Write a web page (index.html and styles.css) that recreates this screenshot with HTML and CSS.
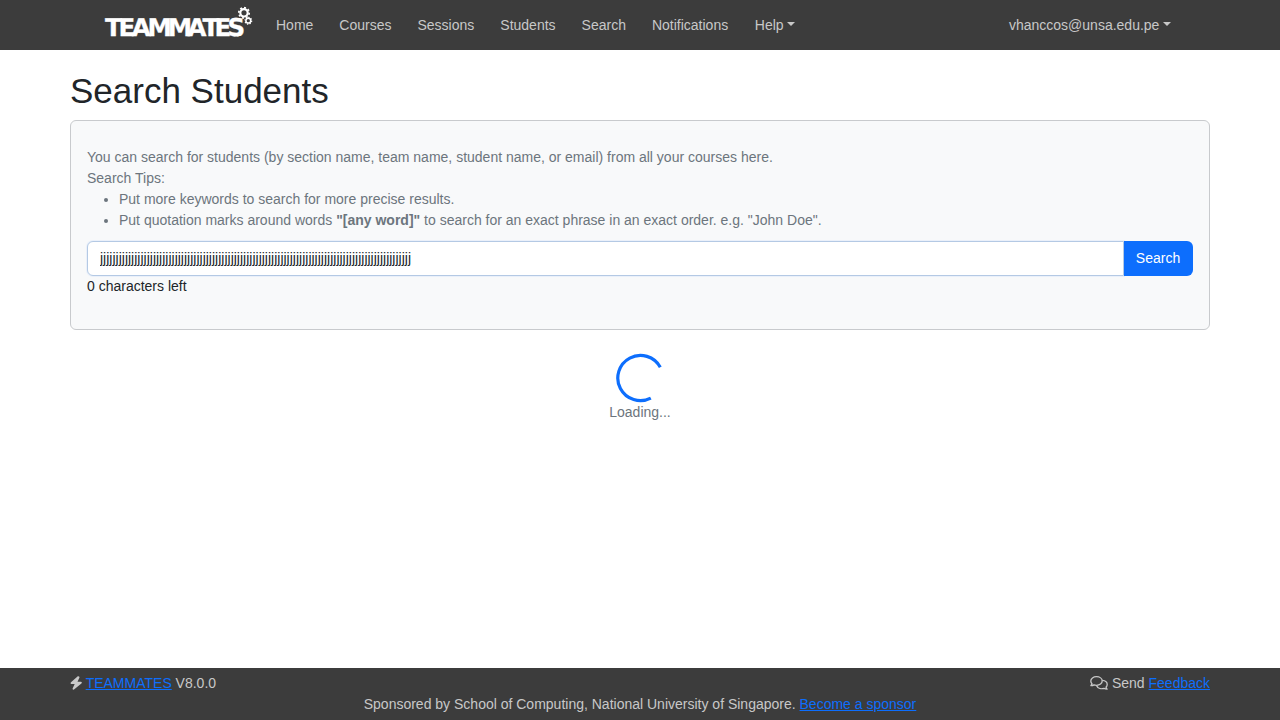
FILE: index.html
```html
<!DOCTYPE html>
<html lang="en">
<head>
<meta charset="utf-8">
<title>TEAMMATES</title>
<link rel="stylesheet" href="styles.css">
</head>
<body>
<nav class="navbar">
  <a class="brand" aria-label="TEAMMATES home">
    <svg width="148" height="32" viewBox="105 6 148 32">
      <text class="logo-text" y="35.5" x="105 118.4 131.8 147.4 167.8 187.4 202.6 214.4 227.6">TEAMMATES</text>
      <circle class="gear" cx="244" cy="12.8" r="3.7" stroke-width="2.2"/>
      <circle class="gear" cx="244" cy="12.8" r="5.2" stroke-width="1.7" pathLength="80" stroke-dasharray="5 5"/>
      <circle class="gear" cx="248.3" cy="20.7" r="2.4" stroke-width="1.5"/>
      <circle class="gear" cx="248.3" cy="20.7" r="3.4" stroke-width="1.2" pathLength="80" stroke-dasharray="5 5"/>
    </svg>
  </a>
  <div class="nav-links">
    <a>Home</a><a>Courses</a><a>Sessions</a><a>Students</a><a>Search</a><a>Notifications</a><a class="dropdown help-menu">Help</a>
  </div>
  <a class="dropdown account">vhanccos@unsa.edu.pe</a>
</nav>
<main class="container">
  <h1>Search Students</h1>
  <section class="card">
    <div class="help">
      <p>You can search for students (by section name, team name, student name, or email) from all your courses here.</p>
      <p>Search Tips:</p>
      <ul>
        <li>Put more keywords to search for more precise results.</li>
        <li>Put quotation marks around words <b>"[any word]"</b> to search for an exact phrase in an exact order. e.g. "John Doe".</li>
      </ul>
    </div>
    <div class="input-group">
      <input type="text" value="jjjjjjjjjjjjjjjjjjjjjjjjjjjjjjjjjjjjjjjjjjjjjjjjjjjjjjjjjjjjjjjjjjjjjjjjjjjjjjjjjjjjjjjjjjjjjjjjjjjj">
      <button>Search</button>
    </div>
    <div>0 characters left</div>
  </section>
  <div class="loading">
    <svg width="50" height="50" viewBox="-24.5 -25.5 50 50">
      <path class="spinner" d="M20.8-11.2A22.6 22.6 0 1 0 11.3 19.6"/>
    </svg>
    <div>Loading...</div>
  </div>
</main>
<footer class="footer">
  <div class="footer-row">
    <div>
      <svg class="bolt" width="12" height="14" viewBox="0 0 12 14"><path d="M7.8.2 1 6.3Q-.1 7.8 1.5 8H4.7L2.6 12.4Q2.4 14 4 13.6L11.4 7.4Q12.5 6.1 10.8 5.8H7.5L9.5 1.6Q9.5 0 7.8.2Z"/></svg>
      <a class="link">TEAMMATES</a> V8.0.0
    </div>
    <div>
      <svg class="comments" width="18" height="14" viewBox="0 0 18 14"><path d="M6.5.7C3.3.7.8 2.6.8 5c0 1.2.5 2 1.2 2.8L.9 9.7c1.4 0 2.4-.3 3.1-.8.8.3 1.6.4 2.5.4 3.2 0 5.7-1.9 5.7-4.3S9.7.7 6.5.7Z"/><path d="M12.3 4.3c2.8.2 4.9 1.9 4.9 4.1 0 1.1-.5 2-1.2 2.8l1.1 2c-1.4 0-2.4-.4-3.1-.9-2.7.9-6.1.3-7.4-2.5"/></svg>
      Send <a class="link">Feedback</a>
    </div>
  </div>
  <div class="sponsor">Sponsored by School of Computing, National University of Singapore. <a class="link">Become a sponsor</a></div>
</footer>
</body>
</html>
```

FILE: styles.css
```css
* { box-sizing: border-box; }
body {
  margin: 0;
  height: 720px;
  display: flex;
  flex-direction: column;
  overflow: hidden;
  background: #fff;
  color: #212529;
  font: 14px/21px "Liberation Sans", Arial, sans-serif;
}
.navbar {
  height: 50px;
  flex: none;
  padding: 0 109px 0 105px;
  display: flex;
  align-items: center;
  background: #3c3c3c;
  color: #c8c8c8;
}
.brand { height: 32px; margin: -6px 23px 0 0; }
.brand svg { display: block; overflow: visible; }
.logo-text {
  font: bold 24.5px "DejaVu Sans", sans-serif;
  fill: #fff;
  stroke: #fff;
  stroke-width: 0.3;
  text-rendering: geometricPrecision;
}
.gear { fill: none; stroke: #fff; }
.nav-links { display: flex; gap: 26px; }
.help-menu { margin-left: 0.6px; }
.dropdown::after {
  content: "";
  display: inline-block;
  margin-left: 3.6px;
  vertical-align: 3.6px;
  border: 4.2px solid transparent;
  border-top-color: currentColor;
  border-bottom: 0;
}
.account { margin-left: auto; }
.container { width: 1140px; margin: 20px auto 0; flex: 1; }
h1 { margin: 0 0 8px; font-size: 35px; line-height: 42px; font-weight: 400; }
.card {
  height: 210px;
  padding: 26px 16px 0;
  border: 1px solid #c8cacd;
  border-radius: 6px;
  background: #f8f9fa;
}
.help { color: #6c757d; }
.help p { margin: 0; }
.help ul { margin: 0 0 10px; padding-left: 32px; }
.input-group { display: flex; height: 35px; }
.input-group input {
  flex: 1;
  padding: 0 12px;
  border: 1px solid #b4c9e4;
  border-radius: 6px 0 0 6px;
  box-shadow: 0 0 0 1px rgba(13, 110, 253, .06);
  background: #fff;
  color: #212529;
  font: inherit;
  outline: 0;
}
.input-group button {
  width: 69px;
  padding: 0 1px 0 0;
  border: 0;
  border-radius: 0 6px 6px 0;
  background: #0d6efd;
  color: #fff;
  font: inherit;
}
.loading { margin-top: 23px; text-align: center; color: #6c757d; }
.loading svg { display: block; margin: 0 auto -1px; }
.spinner { fill: none; stroke: #0d6efd; stroke-width: 3.2; }
.footer {
  height: 52px;
  flex: none;
  padding: 5px 70px 0;
  background: #3c3c3c;
  color: #c8c8c8;
}
.footer-row { display: flex; justify-content: space-between; }
.sponsor { text-align: center; }
.link { color: #0d6efd; text-decoration: underline; }
.bolt { fill: #c8c8c8; vertical-align: -2px; }
.comments { fill: none; stroke: #c8c8c8; stroke-width: 1.3; stroke-linejoin: round; vertical-align: -2px; }
```
